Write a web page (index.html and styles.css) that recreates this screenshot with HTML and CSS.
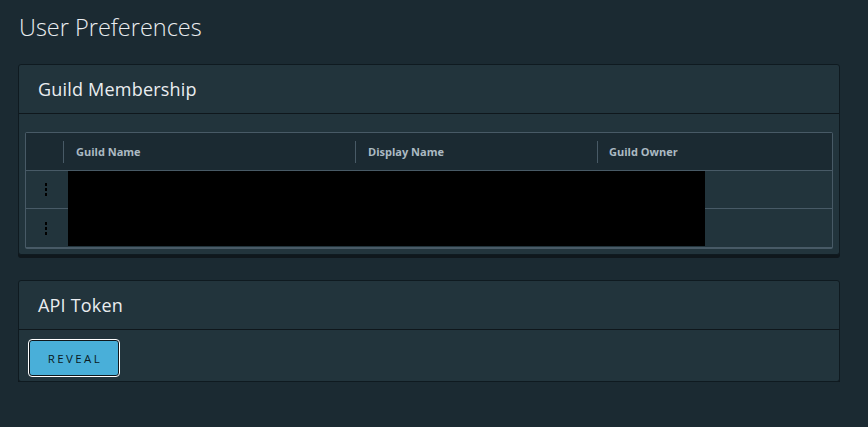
FILE: index.html
```html
<!DOCTYPE html>
<html>
<head>
<meta charset="utf-8">
<link rel="stylesheet" href="styles.css">
</head>
<body>
<main class="page">
  <h1 class="title">User Preferences</h1>

  <section class="card">
    <div class="card-header">Guild Membership</div>
    <div class="card-block">
      <div class="grid">
        <div class="grid-row grid-head">
          <div class="cell action-cell"></div>
          <div class="cell col-name"><span class="sep"></span>Guild Name</div>
          <div class="cell col-display"><span class="sep"></span>Display Name</div>
          <div class="cell col-owner"><span class="sep"></span>Guild Owner</div>
        </div>
        <div class="grid-row">
          <div class="cell action-cell"><span class="kebab"><i></i><i></i><i></i></span></div>
          <div class="cell col-name"></div>
          <div class="cell col-display"></div>
          <div class="cell col-owner"></div>
        </div>
        <div class="grid-row last">
          <div class="cell action-cell"><span class="kebab"><i></i><i></i><i></i></span></div>
          <div class="cell col-name"></div>
          <div class="cell col-display"></div>
          <div class="cell col-owner"></div>
        </div>
        <div class="redact"></div>
      </div>
    </div>
  </section>

  <section class="card">
    <div class="card-header">API Token</div>
    <div class="card-block token-block">
      <button class="btn-primary">REVEAL</button>
    </div>
  </section>
</main>
</body>
</html>
```

FILE: styles.css
```css
html, body {
  margin: 0;
  padding: 0;
  background: #1b2a32;
  font-family: "Open Sans", "Liberation Sans", sans-serif;
  color: #e9ecef;
}

.page {
  padding: 12px 28px 0 18px;
}

.title {
  margin: 0 0 0 1px;
  font-size: 23.5px;
  font-weight: 300;
  line-height: 30px;
  color: #eaedf0;
}

.card {
  margin-top: 22px;
  background: #22343c;
  border: 1px solid #0f1a20;
  border-radius: 3px;
  box-shadow: 0 3px 0 #0f171c;
}

.card + .card {
  margin-top: 25px;
}

.card-header {
  height: 48px;
  line-height: 48px;
  padding: 0 19px;
  font-size: 18px;
  font-weight: 400;
  letter-spacing: 0.2px;
  color: #eaedf0;
  border-bottom: 1px solid #0f171c;
}

.card-block {
  padding: 18px 6px 5px 6px;
}

.token-block {
  padding: 10px 10px 5px 10px;
}

.grid {
  position: relative;
  border: 1px solid #485a66;
  border-bottom-width: 2px;
  border-radius: 2px;
}

.grid-row {
  display: flex;
  height: 37px;
  border-bottom: 1px solid #485a66;
}

.grid-row.last {
  border-bottom: none;
  height: 38px;
}

.grid-head {
  background: #1b2a32;
}

.cell {
  position: relative;
  box-sizing: border-box;
  display: flex;
  align-items: center;
  font-size: 11px;
  font-weight: 700;
  color: #acbac3;
}

.action-cell {
  width: 37px;
  justify-content: center;
}

.col-name { width: 292px; padding-left: 13px; }
.col-display { width: 242px; padding-left: 13px; }
.col-owner { flex: 1; padding-left: 12px; }

.sep {
  position: absolute;
  left: 0;
  top: 8px;
  bottom: 7px;
  width: 1px;
  background: #485a66;
}

.kebab {
  display: flex;
  flex-direction: column;
  gap: 2px;
  margin-left: 2px;
}

.kebab i {
  display: block;
  width: 2px;
  height: 3px;
  background: #000;
}

.redact {
  position: absolute;
  left: 42px;
  top: 38px;
  width: 637px;
  height: 75px;
  background: #000;
}

.btn-primary {
  box-sizing: border-box;
  width: 90px;
  height: 36px;
  background: #49afd9;
  color: #0a1a22;
  border: 1px solid #0f171c;
  border-radius: 3px;
  outline: 1px solid #ffffff;
  outline-offset: 0;
  font-family: "Open Sans", "Liberation Sans", sans-serif;
  font-size: 11.5px;
  font-weight: 500;
  letter-spacing: 2.4px;
  padding: 0 0 0 2px;
}
```
